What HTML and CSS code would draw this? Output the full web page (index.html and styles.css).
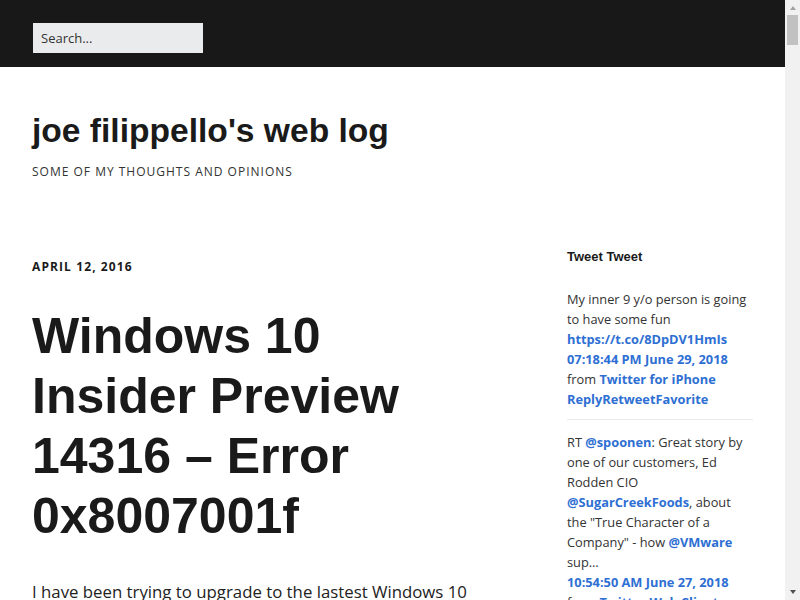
FILE: index.html
```html
<!DOCTYPE html>
<html lang="en">
<head>
<meta charset="utf-8">
<title>joe filippello's web log</title>
<link rel="stylesheet" href="styles.css">
</head>
<body>
<div class="page">
<header class="topbar">
  <form class="search-form">
    <input class="search-field" type="search" placeholder="Search...">
  </form>
</header>
<div class="branding">
  <h1 class="site-title">joe filippello's web log</h1>
  <p class="site-desc">Some of my thoughts and opinions</p>
</div>
<div class="layout">
  <main class="main">
    <article class="post">
      <div class="post-date">April 12, 2016</div>
      <h2 class="post-title">Windows 10 Insider Preview 14316 – Error 0x8007001f</h2>
      <div class="post-body">
        <p>I have been trying to upgrade to the lastest Windows 10 Insider Preview build 14316 for a few days now, and every time the install fails with error 0x8007001f. After some digging around I found a fix that worked for me.</p>
        <p>The upgrade would get to about 30% and then roll back to the previous build.</p>
      </div>
    </article>
  </main>
  <aside class="sidebar">
    <h3 class="widget-title">Tweet Tweet</h3>
    <ul class="tweets">
      <li class="tweet">My inner 9 y/o person is going to have some fun <a href="#">https://t.co/8DpDV1HmIs</a> <a class="tweet-time" href="#">07:18:44 PM June 29, 2018</a> from <a href="#">Twitter for iPhone</a> <span class="tweet-actions"><a href="#">Reply</a><a href="#">Retweet</a><a href="#">Favorite</a></span></li>
      <li class="tweet">RT <a href="#">@spoonen</a>: Great story by one of our customers, Ed Rodden CIO <a href="#">@SugarCreekFoods</a>, about the "True Character of a Company" - how <a href="#">@VMware</a> sup… <a class="tweet-time" href="#">10:54:50 AM June 27, 2018</a> <span class="nowrap">from <a href="#">Twitter Web Client</a></span> <span class="tweet-actions"><a href="#">Reply</a><a href="#">Retweet</a><a href="#">Favorite</a></span></li>
    </ul>
  </aside>
</div>
</div>
<div class="scrollbar" aria-hidden="true">
  <span class="sb-up"></span>
  <span class="sb-thumb"></span>
  <span class="sb-fill"></span>
  <span class="sb-down"></span>
</div>
</body>
</html>
```
FILE: styles.css
```css
html, body {
  margin: 0;
  padding: 0;
  height: 100%;
  overflow: hidden;
}
body {
  display: flex;
  background: #ffffff;
  color: #1a1a1a;
  font-family: "Open Sans", sans-serif;
}
.page {
  flex: 1;
  min-width: 0;
  height: 100vh;
  overflow: hidden;
}
.scrollbar {
  width: 15px;
  flex: none;
  height: 100vh;
  background: #f1f1f1;
  display: flex;
  flex-direction: column;
  align-items: center;
}
.sb-up {
  margin-top: 6px;
  width: 0;
  height: 0;
  border-left: 3.5px solid transparent;
  border-right: 3.5px solid transparent;
  border-bottom: 4px solid #a3a3a3;
}
.sb-thumb {
  margin-top: 5px;
  width: 11px;
  height: 30px;
  background: #c1c1c1;
}
.sb-fill {
  flex: 1;
}
.sb-down {
  margin-bottom: 6px;
  width: 0;
  height: 0;
  border-left: 3.5px solid transparent;
  border-right: 3.5px solid transparent;
  border-top: 4px solid #505050;
}
.topbar {
  background: #181818;
  height: 67px;
  box-sizing: border-box;
  padding: 23px 0 0 33px;
}
.search-form {
  margin: 0;
}
.search-field {
  display: block;
  width: 170px;
  height: 30px;
  box-sizing: border-box;
  border: 0;
  margin: 0;
  padding: 0 8px;
  background: #eaebec;
  font-family: "Open Sans", sans-serif;
  font-size: 13px;
  color: #333;
  outline: none;
}
.search-field::placeholder {
  color: #333;
  opacity: 1;
}
.branding {
  padding: 44px 32px 0 32px;
}
.site-title {
  margin: 0;
  font-family: "Liberation Sans", Arial, sans-serif;
  font-weight: 700;
  font-size: 33.6px;
  line-height: 40px;
  color: #1a1a1a;
}
.site-desc {
  margin: 12px 0 0 0;
  font-size: 12px;
  line-height: 18px;
  letter-spacing: 1px;
  text-transform: uppercase;
  color: #333;
}
.layout {
  display: flex;
  padding: 66px 0 0 32px;
}
.main {
  width: 460px;
  flex: none;
  padding-top: 11px;
}
.post-date {
  font-size: 12px;
  font-weight: 700;
  line-height: 18px;
  letter-spacing: 1.1px;
  text-transform: uppercase;
  color: #1a1a1a;
}
.post-title {
  margin: 30px 0 0 0;
  font-family: "Liberation Sans", Arial, sans-serif;
  font-weight: 700;
  font-size: 50px;
  line-height: 60px;
  color: #1a1a1a;
}
.post-body {
  margin-top: 32px;
  font-size: 16.8px;
  line-height: 28px;
  color: #222;
}
.post-body p {
  margin: 0 0 20px 0;
}
.sidebar {
  width: 186px;
  flex: none;
  margin-left: 75px;
  padding-top: 1px;
}
.widget-title {
  margin: 0;
  font-family: "Liberation Sans", Arial, sans-serif;
  font-size: 13px;
  font-weight: 700;
  line-height: 18px;
  color: #1a1a1a;
}
.tweets {
  list-style: none;
  margin: 23px 0 0 0;
  padding: 0;
}
.tweet {
  font-size: 12.8px;
  line-height: 20px;
  color: #333;
  padding: 0 0 10px 0;
  margin: 0 0 12px 0;
  border-bottom: 1px solid #eaeaea;
}
.tweet a {
  color: #2e6fd3;
  font-weight: 700;
  text-decoration: none;
}
.tweet .tweet-time,
.tweet .tweet-actions {
  display: block;
}
.nowrap {
  white-space: nowrap;
}
```
